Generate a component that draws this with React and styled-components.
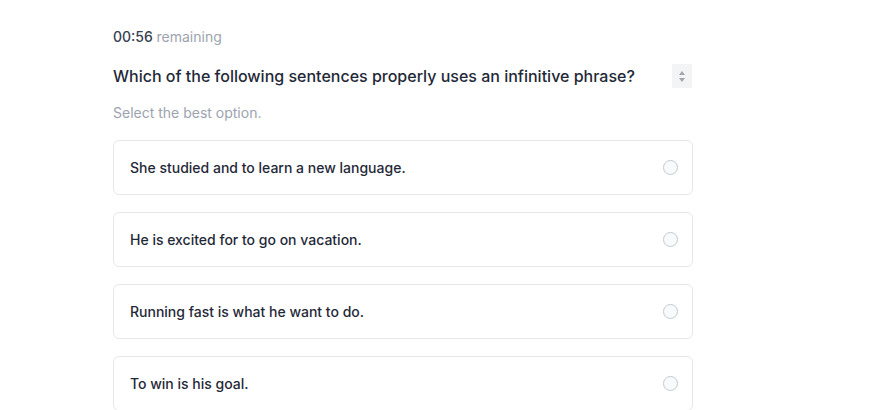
import React, { useState } from 'react';
import styled, { createGlobalStyle } from 'styled-components';

const GlobalStyle = createGlobalStyle`
  body {
    margin: 0;
    background: #ffffff;
    font-family: Inter, 'Noto Sans', sans-serif;
  }
`;

const Page = styled.div`
  padding: 27px 0 0 113px;
  width: 580px;
`;

const Timer = styled.div`
  font-size: 14px;
  line-height: 20px;
  font-weight: 500;
  color: #374151;
  span {
    font-weight: 400;
    color: #9ca3af;
  }
`;

const QuestionRow = styled.div`
  display: flex;
  align-items: center;
  justify-content: space-between;
  margin-top: 17px;
`;

const Question = styled.h2`
  margin: 0;
  font-size: 16px;
  line-height: 24px;
  font-weight: 500;
  color: #1f2937;
`;

const Spinner = styled.div`
  width: 20px;
  height: 24px;
  background: #f3f4f6;
  display: flex;
  flex-direction: column;
  align-items: center;
  justify-content: center;
  gap: 3px;
  margin-right: 1px;
`;

const Arrow = styled.div`
  width: 0;
  height: 0;
  border-left: 3.5px solid transparent;
  border-right: 3.5px solid transparent;
  ${(p) => (p.down ? 'border-top: 4px solid #a1a6ae;' : 'border-bottom: 4px solid #a1a6ae;')}
`;

const Hint = styled.div`
  margin-top: 15px;
  font-size: 14px;
  line-height: 20px;
  color: #9ca3af;
`;

const Options = styled.div`
  display: flex;
  flex-direction: column;
  gap: 17px;
  margin-top: 17px;
`;

const Option = styled.label`
  display: flex;
  align-items: center;
  justify-content: space-between;
  height: 55px;
  box-sizing: border-box;
  padding: 0 14px 0 16px;
  border: 1px solid ${(p) => (p.selected ? '#6366f1' : '#e5e7eb')};
  border-radius: 6px;
  background: #ffffff;
  cursor: pointer;
`;

const OptionText = styled.span`
  font-size: 14px;
  font-weight: 500;
  color: #1f2937;
`;

const Radio = styled.span`
  width: 15px;
  height: 15px;
  box-sizing: border-box;
  border-radius: 50%;
  border: 1px solid #c4c8ce;
  background: ${(p) => (p.selected ? '#6366f1' : '#f9fafb')};
`;

const options = [
  'She studied and to learn a new language.',
  'He is excited for to go on vacation.',
  'Running fast is what he want to do.',
  'To win is his goal.',
];

export default function App() {
  const [selected, setSelected] = useState(null);
  return (
    <>
      <GlobalStyle />
      <Page>
        <Timer>
          00:56 <span>remaining</span>
        </Timer>
        <QuestionRow>
          <Question>Which of the following sentences properly uses an infinitive phrase?</Question>
          <Spinner>
            <Arrow />
            <Arrow down />
          </Spinner>
        </QuestionRow>
        <Hint>Select the best option.</Hint>
        <Options>
          {options.map((text, i) => (
            <Option key={i} selected={selected === i} onClick={() => setSelected(i)}>
              <OptionText>{text}</OptionText>
              <Radio selected={selected === i} />
            </Option>
          ))}
        </Options>
      </Page>
    </>
  );
}
